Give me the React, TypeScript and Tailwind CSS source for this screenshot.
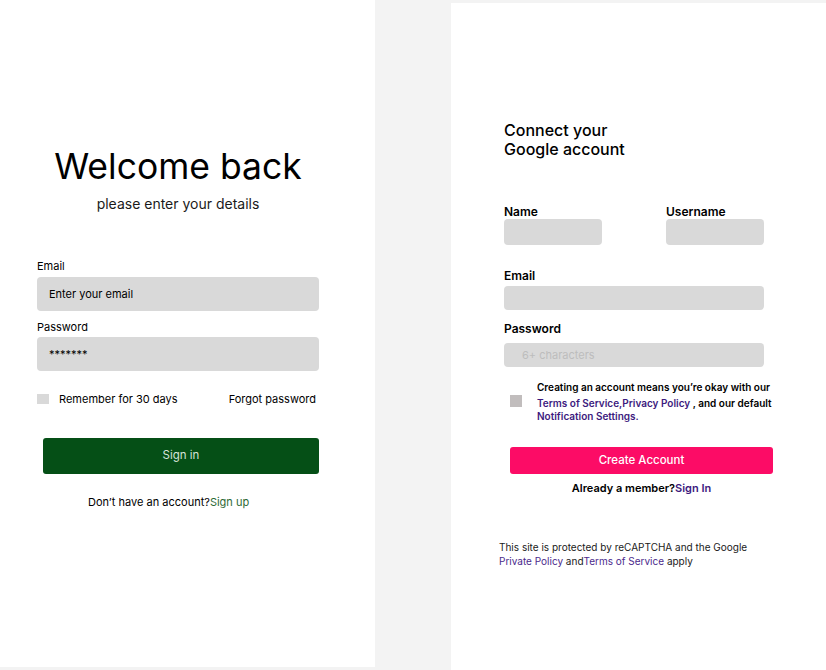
import React from "react"

function LoginPanel() {
    return (
        <div className="w-[375px] h-[667px] shrink-0 bg-white pl-[37px] pr-[56px] pt-[145px]">
            <h1 className="text-center text-[35.5px] leading-[44px] text-black">Welcome back</h1>
            <p className="mt-[5px] text-center text-[14px] leading-[20px] text-[#1a1a1a]">please enter your details</p>

            <label className="mt-[44px] block text-[11px] leading-4 text-black">Email</label>
            <div className="mt-[3px] flex h-[34px] items-center rounded-[4px] bg-[#d9d9d9] px-3 text-[11px] text-black">
                Enter your email
            </div>

            <label className="mt-[8px] block text-[11px] leading-4 text-black">Password</label>
            <div className="mt-[2px] flex h-[34px] items-center rounded-[4px] bg-[#d9d9d9] px-3 text-[11px] text-black">
                *******
            </div>

            <div className="mt-[20px] flex items-center justify-between pr-[3px] text-[11px] leading-4 text-black">
                <div className="flex items-center gap-[10px]">
                    <span className="block h-[10px] w-[12px] bg-[#d9d9d9]" />
                    <span>Remember for 30 days</span>
                </div>
                <span>Forgot password</span>
            </div>

            <button className="ml-[6px] mt-[31px] flex h-[36px] w-[276px] items-center justify-center rounded-[3px] bg-[#054f16] text-[11.5px] text-[#d6e2d8]">
                Sign in
            </button>

            <p className="ml-[51px] mt-[20px] text-[11px] leading-4 text-black">
                Don’t have an account?<span className="text-[#2d6a36]">Sign up</span>
            </p>
        </div>
    )
}

function SignupPanel() {
    return (
        <div className="mt-[3px] h-[667px] w-[375px] shrink-0 bg-white pl-[53px] pr-[62px] pt-[118px]">
            <h2 className="text-base leading-[19px] font-medium text-black">
                Connect your
                <br />
                Google account
            </h2>

            <div className="mt-[46px] flex justify-between">
                <div>
                    <label className="block text-xs leading-[14px] font-semibold text-black">Name</label>
                    <div className="h-[26px] w-[98px] rounded-[4px] bg-[#d9d9d9]" />
                </div>
                <div>
                    <label className="block text-xs leading-[14px] font-semibold text-black">Username</label>
                    <div className="h-[26px] w-[98px] rounded-[4px] bg-[#d9d9d9]" />
                </div>
            </div>

            <label className="mt-[24px] block text-xs leading-[14px] font-semibold text-black">Email</label>
            <div className="mt-[3px] h-[24px] rounded-[4px] bg-[#d9d9d9]" />

            <label className="mt-[12px] block text-xs leading-[14px] font-semibold text-black">Password</label>
            <div className="mt-[7px] flex h-[24px] items-center rounded-[4px] bg-[#d9d9d9] pl-[18px] text-[11px] text-[#bdbdbd]">
                6+ characters
            </div>

            <div className="mt-[13px] flex items-center whitespace-nowrap">
                <span className="ml-[6px] block h-[12px] w-[12px] shrink-0 bg-[#c1bdbd]" />
                <div className="ml-[15px] text-[10px] font-semibold text-black">
                    <div className="leading-[14px]">Creating an account means you’re okay with our</div>
                    <div className="mt-[2px] leading-[14px]">
                        <span className="text-[#3d1a7e]">Terms of Service,Privacy Policy</span> , and our default
                    </div>
                    <div className="leading-[12px] text-[#3d1a7e]">Notification Settings.</div>
                </div>
            </div>

            <button className="ml-[6px] mt-[25px] flex h-[27px] w-[263px] items-center justify-center rounded-[3px] bg-[#fc0c66] text-[11.5px] font-medium text-white">
                Create Account
            </button>

            <p className="ml-[6px] mt-[7px] w-[263px] text-center text-[11px] leading-[14px] font-semibold text-black">
                Already a member?<span className="text-[#3d1a7e]">Sign In</span>
            </p>

            <div className="-ml-[5px] mt-[45px] text-[10px] leading-[14px] text-[#1a1a1a]">
                <div>This site is protected by reCAPTCHA and the Google</div>
                <div>
                    <span className="text-[#4b2a8c]">Private Policy</span> and<span className="text-[#4b2a8c]">Terms of Service</span> apply
                </div>
            </div>
        </div>
    )
}

export default function App() {
    return (
        <div className="flex h-[670px] w-[826px] gap-[76px] overflow-hidden bg-[#f3f3f3] font-['Inter',sans-serif]">
            <LoginPanel />
            <SignupPanel />
        </div>
    )
}
